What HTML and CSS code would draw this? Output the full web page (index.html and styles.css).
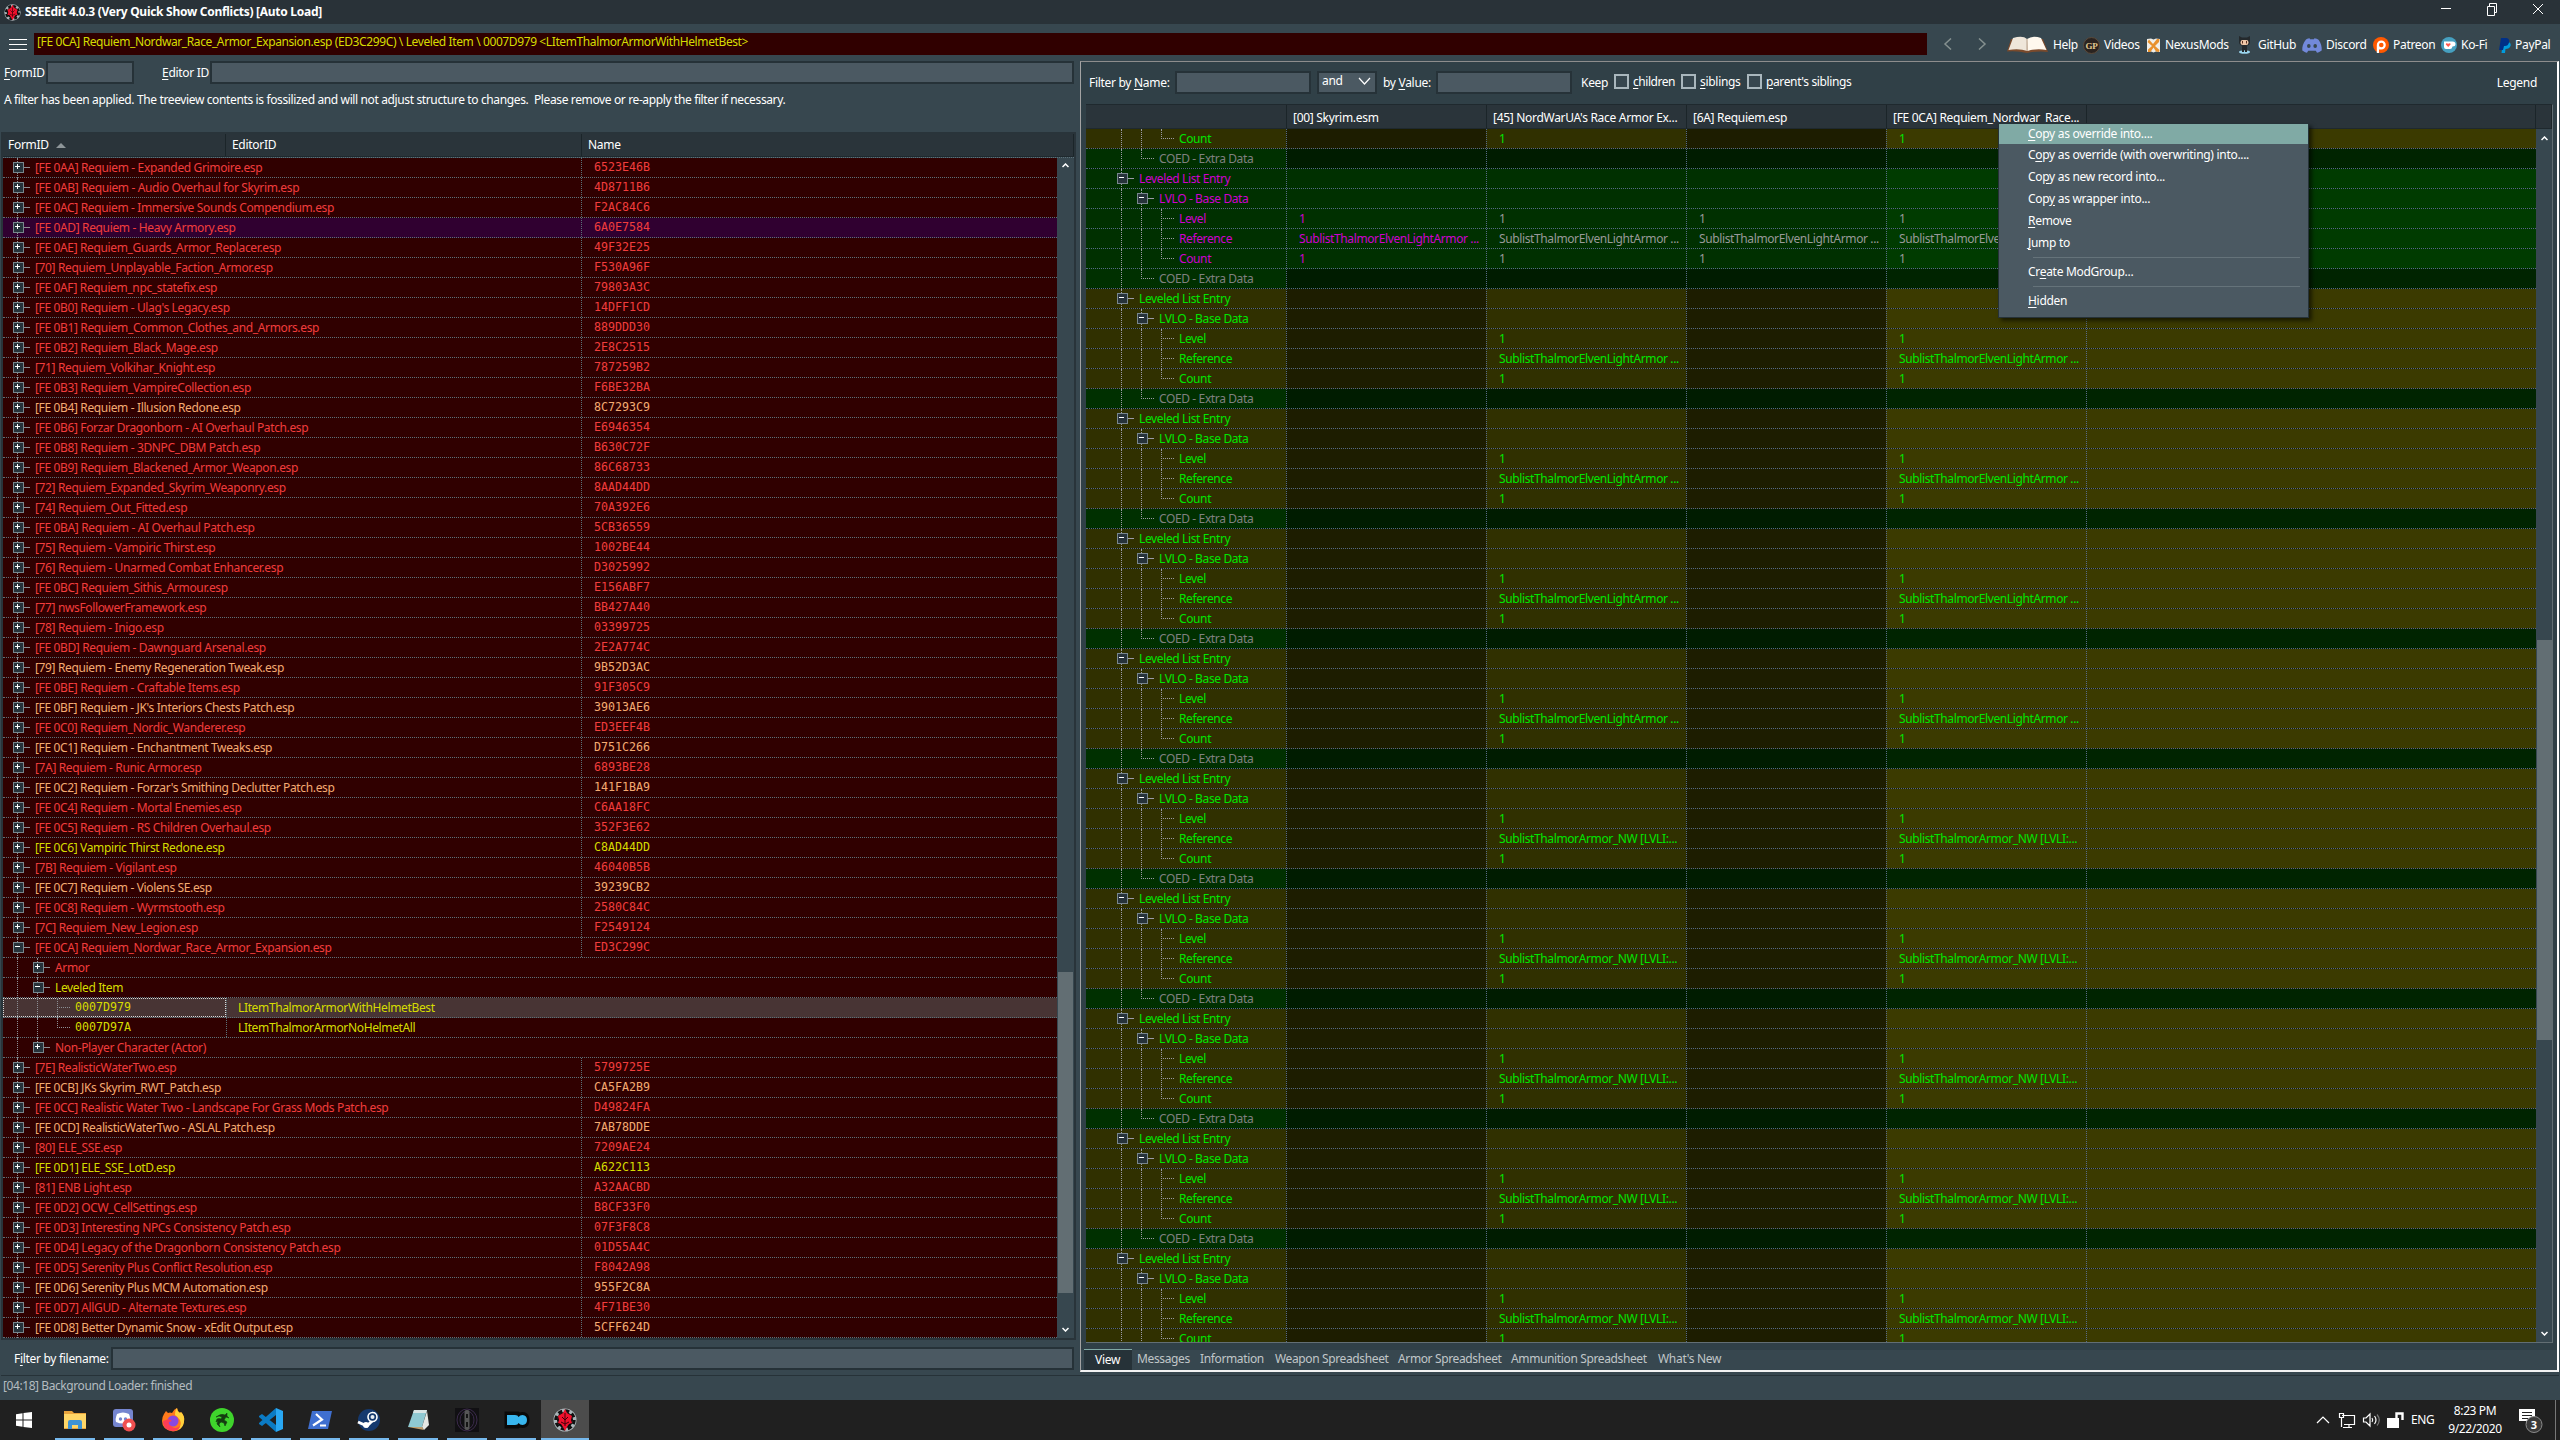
FILE: index.html
```html
<!DOCTYPE html>
<html lang="en">
<head>
<meta charset="utf-8">
<title>SSEEdit 4.0.3</title>
<link rel="stylesheet" href="styles.css">
</head>
<body>
<svg class="defs" width="0" height="0">
  <symbol id="sse" viewBox="0 0 24 24"><circle cx="12" cy="12" r="11.5" fill="#aab4b8"/><circle cx="12" cy="12" r="9.2" fill="none" stroke="#111" stroke-width="3" stroke-dasharray="4.2 3"/><circle cx="12" cy="12" r="8" fill="#0c0c0c"/><path d="M12 1l2 4 5 3-1 4 1 3-3 1-2 3-2 4-2-4-2-3-3-1 1-3-1-4 5-3z" fill="#f0102c"/><path d="M12 5v13M9 9l3 3 3-3M8 14l4 2 4-2" stroke="#400008" fill="none"/></symbol>
  <symbol id="discord" viewBox="0 0 20 15"><path d="M4 1.5C6 .5 7 .3 7.600.3L8 1.300h4l.4-1C14 .4 15.500 1 16.500 1.700 19 5 20 9 19.700 12.500 18 13.800 16.500 14.500 15 14.800l-1.200-2H6.200L5 14.800C3.500 14.500 2 13.800.3 12.500 0 9 1 5 4 1.500z" fill="#7289da"/><ellipse cx="6.800" cy="8" rx="1.800" ry="2" fill="#37474f"/><ellipse cx="13.200" cy="8" rx="1.800" ry="2" fill="#37474f"/></symbol>
</svg>

<header class="titlebar">
  <svg width="17" height="17"><use href="#sse"/></svg>
  <b class="apptitle">SSEEdit 4.0.3 (Very Quick Show Conflicts) [Auto Load]</b>
  <svg class="winbtns" width="104" height="14" fill="none" stroke="#fff"><path d="M1 6.500h10M47.500 4.500h7v9h-7zM49.500 4v-2.500h7v9H55M93 2l10 10M103 2L93 12"/></svg>
</header>

<div class="toolbar">
  <svg class="burger" width="18" height="11" stroke="#fff"><path d="M0 .5h18M0 5.500h18M0 10.500h18"/></svg>
  <div class="path">[FE 0CA] Requiem_Nordwar_Race_Armor_Expansion.esp (ED3C299C) \ Leveled Item \ 0007D979 &lt;LItemThalmorArmorWithHelmetBest&gt;</div>
  <svg class="nav" width="44" height="12" fill="none" stroke="#84908f" stroke-width="1.500"><path d="M8 .5L2 6l6 5.500M36 .5L42 6l-6 5.500"/></svg>
  <div class="links">
    <span class="link help"><svg width="43" height="18" viewBox="0 0 43 18"><path d="M5 3L1 15.500q10-1 20 1.500 12-2.500 21-1L37 3z" fill="#7a4a2c"/><path d="M7 2q10-3 14 1l.5 12Q13 12 2.500 14z" fill="#efe6da"/><path d="M35 2q-8-3-14 1l.5 12Q31 12 40.500 14z" fill="#fff8ee"/><path d="M21 3v12" stroke="#b59f8a"/></svg>Help</span>
    <span class="link videos"><svg width="17" height="17" viewBox="0 0 17 17"><circle cx="8.500" cy="8.500" r="8" fill="#2a2320" stroke="#5b4a3a"/><text x="8.500" y="12" text-anchor="middle" class="gp">GP</text></svg>Videos</span>
    <span class="link nexus"><svg width="15" height="15" viewBox="0 0 15 15"><path d="M1 1l4-.5 2.500 1L10 .5 14 1v13l-4-.5-2.500 1-2.500-1L1 14z" fill="#f0eee8"/><path d="M3 1.500L7 6l4-5h2.500L13 4 9 8l4.500 4-.5 2-3-.5-2.500-4-3 4.500H2v-2.500L6 8 1.500 4z" fill="#e8912c"/></svg>NexusMods</span>
    <span class="link github"><svg width="19" height="18" viewBox="0 0 19 18"><path d="M4 0l3 1.500h5L15 0v7q-1 3-5.500 3T4 7z" fill="#24292c"/><rect x="5.500" y="4" width="8" height="5" rx="2.300" fill="#f0c8a8"/><path d="M7.500 5v2.500M11.500 5v2.500" stroke="#5a3020"/><path d="M7 10h5v6H7z" fill="#24292c"/><ellipse cx="9.500" cy="16" rx="5.500" ry="1.800" fill="#9ad5ee"/><path d="M8 10v6M11 10v6" stroke="#24292c" stroke-width="2"/></svg>GitHub</span>
    <span class="link disc"><svg width="20" height="15"><use href="#discord"/></svg>Discord</span>
    <span class="link patreon"><svg width="16" height="16" viewBox="0 0 16 16"><circle cx="8" cy="8" r="8" fill="#ff5900"/><path d="M3.800 16V8a4.500 4.500 0 1 1 4.500 4.500H6V16z" fill="#fff"/><circle cx="8.300" cy="8" r="2.300" fill="#ff5900"/></svg>Patreon</span>
    <span class="link kofi"><svg width="16" height="16" viewBox="0 0 16 16"><circle cx="8" cy="8" r="8" fill="#46a0c0"/><path d="M3 4.500h8.500q3 0 3 2.500t-3 2.500Q11 12 9 12H5Q3 12 3 10z" fill="#fff"/><path d="M7.200 10L4.800 7.500q0-2 2.400-.8 2.400-1.200 2.400.8z" fill="#ff5a50"/></svg>Ko-Fi</span>
    <span class="link paypal"><svg width="12" height="15" viewBox="0 0 12 15"><path d="M4 4h5.500q3 1 2 4t-5 3L6 15H2.500z" fill="#009cde"/><path d="M2 0h5.500Q11 .5 10 4.500T5 8L4 12H0z" fill="#003087"/></svg>PayPal</span>
  </div>
</div>

<main class="main">
  <section class="left">
    <div class="idrow"><label class="lf"><u>F</u>ormID</label><div class="input i1"></div><label class="le"><u>E</u>ditor ID</label><div class="input i2"></div></div>
    <p class="note">A filter has been applied. The treeview contents is fossilized and will not adjust structure to changes.&nbsp; Please remove or re-apply the filter if necessary.</p>
    <div class="tree">
      <div class="thead"><span class="h1">FormID <i class="sort"></i></span><span class="h2">EditorID</span><span class="h3">Name</span></div>
      <div class="tbody">
        <div class="rows" id="plugins"></div>
        <div class="scroll"><svg width="7" height="5"><path d="M.5 4L3.500 1l3 3" fill="none" stroke="#fff" stroke-width="1.500"/></svg><div class="thumb t1"></div><svg width="7" height="5"><path d="M.5 1l3 3 3-3" fill="none" stroke="#fff" stroke-width="1.500"/></svg></div>
      </div>
    </div>
    <div class="filerow"><label>F<u>i</u>lter by filename:</label><div class="input i3"></div></div>
  </section>

  <section class="right">
    <div class="filters">
      <label class="fl">Filter by <u>N</u>ame:</label><div class="input"></div>
      <div class="select">and<svg width="13" height="8"><path d="M1 1l5.500 6L12 1" fill="none" stroke="#fff" stroke-width="1.200"/></svg></div>
      <label class="fv">by <u>V</u>alue:</label><div class="input"></div>
      <label class="fk">Keep</label>
      <i class="check"></i><label class="c1"><u>c</u>hildren</label><i class="check"></i><label class="c2"><u>s</u>iblings</label><i class="check"></i><label class="c3"><u>p</u>arent's siblings</label>
      <span class="legend">Legend</span>
    </div>
    <div class="grid">
      <div class="ghead"><span></span><span>[00] Skyrim.esm</span><span>[45] NordWarUA's Race Armor Ex...</span><span>[6A] Requiem.esp</span><span>[FE 0CA] Requiem_Nordwar_Race...</span><span></span><span></span></div>
      <div class="gbody">
        <div class="grows" id="records"></div>
        <div class="scroll s2"><svg width="7" height="5"><path d="M.5 4L3.500 1l3 3" fill="none" stroke="#fff" stroke-width="1.500"/></svg><div class="thumb t2"></div><svg width="7" height="5"><path d="M.5 1l3 3 3-3" fill="none" stroke="#fff" stroke-width="1.500"/></svg></div>
      </div>
    </div>
    <nav class="tabs"><span class="tab on">View</span><span class="tab w1">Messages</span><span class="tab w2">Information</span><span class="tab w3">Weapon Spreadsheet</span><span class="tab w4">Armor Spreadsheet</span><span class="tab w5">Ammunition Spreadsheet</span><span class="tab">What's New</span></nav>
  </section>
</main>

<div class="status">[04:18] Background Loader: finished</div>

<footer class="taskbar">
  <span class="task start"><svg width="16" height="16" fill="#fff"><path d="M0 2.200l6.500-.9v6.200H0zM7.500 1.100L16 0v7.500H7.500zM0 8.500h6.500v6.200L0 13.800zM7.500 8.500H16V16l-8.500-1.100z"/></svg></span>
  <span class="task run"><svg width="22" height="20" viewBox="0 0 22 20"><path d="M0 1h8l2 2h12v16H0z" fill="#e8a33c"/><path d="M0 4h22v14H0z" fill="#ffd667"/><path d="M4 19v-7q0-2 2-2h10q2 0 2 2v7h-4v-4H8v4z" fill="#3f93d4"/></svg></span>
  <span class="task run"><svg width="24" height="24" viewBox="0 0 24 24"><rect x="1" y="1" width="20" height="18" rx="3" fill="#7585cf"/><path d="M5 6q6-3 12 0 2 5 1 8-7 3-14 0-1-3 1-8z" fill="#fff"/><circle cx="8.500" cy="11" r="1.700" fill="#7585cf"/><circle cx="13.500" cy="11" r="1.700" fill="#7585cf"/><circle cx="17" cy="17" r="6.500" fill="#f05050"/><circle cx="17" cy="17" r="2.500" fill="#fff"/></svg></span>
  <span class="task run"><svg width="24" height="24" viewBox="0 0 24 24"><path d="M3 6l2-3 2 2q2-1 4 0 2-4 5-5 0 3 3 5l1-1q4 4 3 10-2 9-11 9.500Q1 22 1 13q0-4 2-7z" fill="#ff7a1c"/><path d="M16 0q0 3 3 5l1-1q4 4 3 10-1 6-6 8 4-5 2-10-2-3-5-5 0-5 2-7z" fill="#ffd23c"/><circle cx="12" cy="13" r="5.500" fill="#8a48e0"/><path d="M2 13q0 10 11 10 5-1 6-5-5 4-9 0-3-2-2-4l3-1q-3-3-6-1z" fill="#ff3d56"/></svg></span>
  <span class="task run"><svg width="24" height="24" viewBox="0 0 24 24"><circle cx="12" cy="12" r="12" fill="#3fd42c"/><path d="M6 9q5-4 9-2l2-2v3l2 2-3-1-2 3 3 2-2 4-1-3-3-1-2 2 1 3-3-3 1-3-2 1 1-3q2-1 4 0l1-2-3-1z" fill="#143c10" stroke="#143c10" stroke-width=".6"/></svg></span>
  <span class="task run"><svg width="24" height="24" viewBox="0 0 24 24"><path d="M17 0l7 3v18l-7 3z" fill="#29a7f2"/><path d="M17 0v7L3 18 0 16V15zM0 8l3-2 14 11v7L0 9z" fill="#0b7bc4"/></svg></span>
  <span class="task run"><svg width="24" height="20" viewBox="0 0 24 20"><path d="M4 1h20l-4 18H0z" fill="#3f6fd0"/><path d="M8 4l6 5.500L5 15.500M12 15.500h6" fill="none" stroke="#fff" stroke-width="2.200"/></svg></span>
  <span class="task run"><svg width="24" height="24" viewBox="0 0 24 24"><circle cx="12" cy="12" r="11" fill="#15396e"/><path d="M1 14l9 4 5-5 2-9" fill="none" stroke="#fff" stroke-width="3"/><circle cx="15.500" cy="9" r="4.500" fill="#15396e" stroke="#fff" stroke-width="1.600"/><circle cx="15.500" cy="9" r="2" fill="#e8eef5"/><circle cx="9" cy="17" r="3" fill="#fff"/></svg></span>
  <span class="task run"><svg width="22" height="22" viewBox="0 0 22 22"><path d="M7 1h13l-5 17H1z" fill="#8fc9d2"/><path d="M7 1h13l-1 3H6z" fill="#d8e4e4"/><path d="M20 2l2 14-5 5-2-3z" fill="#e6e8e4"/><path d="M1 18h14l2 3z" fill="#c0a070"/></svg></span>
  <span class="task run"><svg width="24" height="24" viewBox="0 0 24 24"><rect width="24" height="24" fill="#111013"/><ellipse cx="12" cy="12" rx="10" ry="11" fill="none" stroke="#3b2a4b"/><ellipse cx="12" cy="12" rx="7" ry="9" fill="none" stroke="#3b2a4b"/><rect x="9.500" y="2" width="5" height="20" rx="2" fill="#565656"/><path d="M11 6h2v4h-2zM11 14h2v5h-2z" fill="#151515"/></svg></span>
  <span class="task run"><svg width="32" height="22" viewBox="0 0 32 22"><path d="M6 4h12l1.500 1q8.500-2 8.500 6t-8.500 6L18 18H6z" fill="#0a0a0a" stroke="#0a0a0a" stroke-width="3"/><path d="M7 6h8q3 0 3.500 2 1.500-2 4-2 4.500.5 4.500 5t-4.500 5q-2.500 0-4-2-.5 2-3.500 2H7z" fill="#38b6ee"/></svg></span>
  <span class="task run active"><svg width="24" height="24"><use href="#sse"/></svg></span>
  <div class="tray">
    <svg width="90" height="20" viewBox="0 0 90 20" fill="none" stroke="#fff" stroke-width="1.200"><path d="M1 13l6-6 6 6M26 5.500h12.500v9H28M23.500 3.500h4v4h-4zM25.500 8v9M27 17.500h9M33 15v2M47.500 8h2.500l4-4v12l-4-4h-2.500zM56 8q1.500 2 0 4M58.500 6q3 4 0 8"/><path d="M61 4.500q4.500 5.500 0 11" stroke="#777"/><path d="M71 8h12v10H71z" fill="#fff" stroke="none"/><path d="M80.500 8V3.500h6V10" stroke-width="2.400"/></svg>
    <span class="lang">ENG</span>
    <span class="clock">8:23 PM<br>9/22/2020</span>
    <svg class="notif" width="26" height="26" viewBox="0 0 26 26"><path d="M1 2h16v12h-6l-3 3v-3H1z" fill="#fff"/><path d="M4 5.500h10M4 8.500h10M4 11.500h6" stroke="#222"/><circle cx="16" cy="17.500" r="8" fill="#3a3a3a" stroke="#8a8a8a"/><text x="16" y="22" text-anchor="middle" class="badge">3</text></svg>
    <i class="peek"></i>
  </div>
</footer>

<div class="menu">
  <div class="mi hot"><u>C</u>opy as override into....</div>
  <div class="mi">C<u>o</u>py as override (with overwriting) into....</div>
  <div class="mi">Co<u>p</u>y as new record into...</div>
  <div class="mi">Cop<u>y</u> as wrapper into...</div>
  <div class="mi"><u>R</u>emove</div>
  <div class="mi"><u>J</u>ump to</div>
  <hr>
  <div class="mi">Cr<u>e</u>ate ModGroup...</div>
  <hr>
  <div class="mi"><u>H</u>idden</div>
</div>
<script src="rows.js"></script>
</body>
</html>
```
FILE: rows.js
```js
// Plugin rows: colour key | label | CRC
const plugins = `r|[FE 0AA] Requiem - Expanded Grimoire.esp|6523E46B
r|[FE 0AB] Requiem - Audio Overhaul for Skyrim.esp|4D8711B6
r|[FE 0AC] Requiem - Immersive Sounds Compendium.esp|F2AC84C6
r purple|[FE 0AD] Requiem - Heavy Armory.esp|6A0E7584
r|[FE 0AE] Requiem_Guards_Armor_Replacer.esp|49F32E25
r|[70] Requiem_Unplayable_Faction_Armor.esp|F530A96F
r|[FE 0AF] Requiem_npc_statefix.esp|79803A3C
r|[FE 0B0] Requiem - Ulag's Legacy.esp|14DFF1CD
r|[FE 0B1] Requiem_Common_Clothes_and_Armors.esp|889DDD30
r|[FE 0B2] Requiem_Black_Mage.esp|2E8C2515
r|[71] Requiem_Volkihar_Knight.esp|787259B2
r|[FE 0B3] Requiem_VampireCollection.esp|F6BE32BA
o|[FE 0B4] Requiem - Illusion Redone.esp|8C7293C9
r|[FE 0B6] Forzar Dragonborn - AI Overhaul Patch.esp|E6946354
r|[FE 0B8] Requiem - 3DNPC_DBM Patch.esp|B630C72F
r|[FE 0B9] Requiem_Blackened_Armor_Weapon.esp|86C68733
r|[72] Requiem_Expanded_Skyrim_Weaponry.esp|8AAD44DD
r|[74] Requiem_Out_Fitted.esp|70A392E6
r|[FE 0BA] Requiem - AI Overhaul Patch.esp|5CB36559
r|[75] Requiem - Vampiric Thirst.esp|1002BE44
r|[76] Requiem - Unarmed Combat Enhancer.esp|D3025992
r|[FE 0BC] Requiem_Sithis_Armour.esp|E156ABF7
r|[77] nwsFollowerFramework.esp|BB427A40
r|[78] Requiem - Inigo.esp|03399725
r|[FE 0BD] Requiem - Dawnguard Arsenal.esp|2E2A774C
o|[79] Requiem - Enemy Regeneration Tweak.esp|9B52D3AC
r|[FE 0BE] Requiem - Craftable Items.esp|91F305C9
o|[FE 0BF] Requiem - JK's Interiors Chests Patch.esp|39013AE6
r|[FE 0C0] Requiem_Nordic_Wanderer.esp|ED3EEF4B
o|[FE 0C1] Requiem - Enchantment Tweaks.esp|D751C266
r|[7A] Requiem - Runic Armor.esp|6893BE28
o|[FE 0C2] Requiem - Forzar's Smithing Declutter Patch.esp|141F1BA9
r|[FE 0C4] Requiem - Mortal Enemies.esp|C6AA18FC
r|[FE 0C5] Requiem - RS Children Overhaul.esp|352F3E62
y|[FE 0C6] Vampiric Thirst Redone.esp|C8AD44DD
r|[7B] Requiem - Vigilant.esp|46040B5B
o|[FE 0C7] Requiem - Violens SE.esp|39239CB2
r|[FE 0C8] Requiem - Wyrmstooth.esp|2580C84C
r|[7C] Requiem_New_Legion.esp|F2549124
r|[FE 0CA] Requiem_Nordwar_Race_Armor_Expansion.esp|ED3C299C|minus
r|Armor||vp
y|Leveled Item||vm
y sel|0007D979|LItemThalmorArmorWithHelmetBest|vvt
y|0007D97A|LItemThalmorArmorNoHelmetAll|vvl
r|Non-Player Character (Actor)||vq
r|[7E] RealisticWaterTwo.esp|5799725E
o|[FE 0CB] JKs Skyrim_RWT_Patch.esp|CA5FA2B9
r|[FE 0CC] Realistic Water Two - Landscape For Grass Mods Patch.esp|D49824FA
o|[FE 0CD] RealisticWaterTwo - ASLAL Patch.esp|7AB78DDE
r|[80] ELE_SSE.esp|7209AE24
y|[FE 0D1] ELE_SSE_LotD.esp|A622C113
r|[81] ENB Light.esp|A32AACBD
r|[FE 0D2] OCW_CellSettings.esp|B8CF33F0
r|[FE 0D3] Interesting NPCs Consistency Patch.esp|07F3F8C8
r|[FE 0D4] Legacy of the Dragonborn Consistency Patch.esp|01D55A4C
r|[FE 0D5] Serenity Plus Conflict Resolution.esp|F8042A98
o|[FE 0D6] Serenity Plus MCM Automation.esp|955F2C8A
r|[FE 0D7] AllGUD - Alternate Textures.esp|4F71BE30
o|[FE 0D8] Better Dynamic Snow - xEdit Output.esp|5CFF624D`;

// Guide cells: v line, t tee, l elbow, p plus, m minus, q plus on an elbow
const guides = s => [...s].map(c => `<i class="g g-${c}"></i>`).join('');

document.getElementById('plugins').innerHTML = plugins.split('\n').map(line => {
  const [cls, label, val, kind] = line.split('|');
  const g = !kind ? 'p' : kind === 'minus' ? 'm' : kind;
  if (g.length === 3)
    return `<div class="row ${cls} item"><span class="c-id">${guides(g)}<span class="hex">${label}</span></span><span class="c-ed">${val}</span></div>`;
  return `<div class="row ${cls}"><span class="c-name">${guides(g)}<span class="lbl">${label}</span></span>${val ? `<span class="c-crc">${val}</span>` : ''}</div>`;
}).join('');

const rec = (cls, g, label, vals = ['', '', '', '']) =>
  `<div class="grow ${cls}"><span class="tc">${guides(g)}<span class="lbl">${label}</span></span>${vals.map(v => `<span>${v}</span>`).join('')}<span></span></div>`;
const group = (cls, one, ref) =>
  rec(cls, 'm', 'Leveled List Entry') + rec(cls, 'vm', 'LVLO - Base Data') +
  rec(cls, 'vvt', 'Level', one) + rec(cls, 'vvt', 'Reference', ref) + rec(cls, 'vvl', 'Count', one) +
  rec('coed', 'vl', 'COED - Extra Data');
const elven = 'SublistThalmorElvenLightArmor ...', nw = 'SublistThalmorArmor_NW [LVLI:...';
const some = v => ['', v, '', v];
let html = rec('add', 'vvl', 'Count', some('1')) + rec('coed', 'vl', 'COED - Extra Data');
html += group('same', Array(4).fill('1'), Array(4).fill(elven));
for (let i = 0; i < 8; i++) html += group('add', some('1'), some(i < 4 ? elven : nw));
// the ninth group runs off the bottom of the view
html += rec('add', 'm', 'Leveled List Entry') + rec('add', 'vm', 'LVLO - Base Data') +
  rec('add', 'vvt', 'Level', some('1')) + rec('add', 'vvt', 'Reference', some(nw)) + rec('add', 'vvl', 'Count', some('1'));
document.getElementById('records').innerHTML = html;
```
FILE: styles.css
```css
* { box-sizing: border-box; }
body { margin: 0; width: 2560px; height: 1440px; overflow: hidden; display: flex; flex-direction: column; background: #37474f; color: #fff; font: 12px/16px "Noto Sans", "Open Sans", sans-serif; letter-spacing: -.3px; white-space: nowrap; position: relative; }
svg { flex: none; display: block; }
u { text-underline-offset: 2px; }
.defs { position: absolute; }
.titlebar { height: 24px; background: #293238; display: flex; align-items: center; padding-left: 4px; flex: none; }
.apptitle { margin-left: 4px; letter-spacing: -.28px; }
.winbtns { margin: -7px 16px 0 auto; }
.toolbar { height: 37px; flex: none; display: flex; align-items: center; padding-left: 9px; }
.burger { margin-top: 4px; }
.path { margin-left: 7px; width: 1893px; height: 22px; background: #300000; color: #d6dc00; padding-left: 3px; line-height: 17px; margin-top: 3px; letter-spacing: -.39px; }
.nav { margin-left: 16px; margin-top: 3px; }
.links { display: flex; margin-left: 19px; margin-top: 5px; height: 22px; }
.link { display: flex; align-items: center; gap: 4px; }
.help { width: 77px; }
.videos { width: 63px; }
.nexus { width: 89px; }
.github { width: 67px; }
.disc { width: 71px; }
.patreon { width: 68px; }
.kofi { width: 58px; }
.gp { font: bold 9px "Liberation Serif", serif; fill: #e0c890; }
.main { display: flex; height: 1312px; flex: none; }
.left { width: 1080px; display: flex; flex-direction: column; }
.idrow { display: flex; height: 23px; align-items: center; }
.lf { width: 42px; margin-left: 4px; }
.le { width: 48px; margin-left: 28px; }
.input, .select { height: 23px; background: #4b5962; border: 2px solid #263238; }
.i1 { width: 88px; }
.i2 { width: 864px; }
.note { margin: 8px 0 0 4px; height: 40px; letter-spacing: -.37px; }
.tree { margin-left: 1px; width: 1075px; height: 1208px; border: 2px solid #29343a; background: #37474f; }
.thead { height: 23px; background: #2a343a; border-bottom: 1px solid #1f292e; display: flex; line-height: 22px; margin-bottom: 1px; }
.thead span { border-right: 1px solid #1b2529; height: 22px; padding-left: 6px; }
.thead .h1 { width: 223px; display: flex; align-items: center; gap: 7px; padding-left: 5px; }
.h2 { width: 356px; }
.h3 { flex: 1; border: 0; }
.sort { border: 5px solid transparent; border-bottom-color: #8e9699; border-top: 0; }
.tbody { display: flex; height: 1181px; margin-top: -1px; border-top: 1px dotted #5b7078; }
.rows { width: 1054px; background: #300000; letter-spacing: -.36px; }
.row { height: 20px; border-bottom: 1px dotted #5b7078; display: flex; line-height: 19px; }
.r { color: #f23d3d; } .o { color: #f5ab72; } .y { color: #d6dc00; }
.purple { background: #300030; }
.sel { background: #483434; }
.c-name, .c-id { display: flex; padding-left: 4px; }
.c-name { width: 578px; }
.c-id { width: 223px; }
.sel .c-id { outline: 1px dotted #d8d8d8; outline-offset: -1px; }
.c-crc, .hex { font: 11.650px/19px "DejaVu Sans Mono", monospace; letter-spacing: 0; }
.c-crc { border-left: 1px dotted #5b7078; padding-left: 12px; }
.c-ed { border-left: 1px dotted #5b7078; padding-left: 11px; }
.lbl, .hex { margin-left: 8px; }

/* tree guide lines */
.g { width: 20px; height: 20px; flex: none; position: relative; margin-bottom: -1px; --c: #8c8f94; }
.g::before { content: ""; position: absolute; left: 10px; top: 0; height: 20px; border-left: 1px dotted var(--c); }
.g-l::before, .g-q::before { height: 10px; }
.g-t::after, .g-l::after { content: ""; position: absolute; left: 10px; top: 9px; width: 13px; border-top: 1px dotted var(--c); }
.g-p, .g-m, .g-q { background: linear-gradient(var(--c), var(--c)) 15px 9px / 8px 1px no-repeat; width: 23px; margin-right: -3px; }
.g-p::after, .g-m::after, .g-q::after { content: ""; position: absolute; left: 6px; top: 4px; width: 9px; height: 9px; border: 1px solid #78868d; background: linear-gradient(#fff, #fff) 1px 3px / 5px 1px no-repeat, linear-gradient(#fff, #fff) 3px 1px / 1px 5px no-repeat, #26323a; }
.g-m::after { background: linear-gradient(#fff, #fff) 1px 3px / 5px 1px no-repeat, #26323a; }

.scroll { width: 17px; display: flex; flex-direction: column; align-items: center; padding: 5px 0 6px; background: #37474f; }
.thumb { width: 15px; background: #626e73; }
.t1 { height: 321px; margin: 804px 0 auto; }
.filerow { display: flex; align-items: center; margin: 7px 0 0 14px; }
.filerow label { width: 97px; }
.i3 { width: 963px; }

.right { width: 1479px; height: 1311px; border: 2px solid #fff; border-top: 1px solid #8d8d8d; border-left: 1px solid #a3a3a3; border-bottom-color: #f2f2f2; background: #304047; display: flex; flex-direction: column; }
.filters { display: flex; align-items: center; height: 41px; padding-left: 8px; }
.filters .input { width: 136px; }
.fl { width: 86px; padding-top: 2px; }
.select { width: 60px; margin-left: 6px; padding: 0 4px 0 3px; display: flex; justify-content: space-between; align-items: center; line-height: 14px; padding-bottom: 2px; }
.fv { width: 53px; margin-left: 6px; padding-top: 2px; }
.fk { width: 33px; margin-left: 9px; padding-top: 2px; }
.check { width: 15px; height: 15px; border: 2px solid #a9b7bd; background: #37474f; margin-right: 4px; margin-top: -2px; }
.c1 { width: 48px; letter-spacing: -.45px; }
.c2 { width: 47px; }
.c3 { letter-spacing: -.38px; }
.legend { margin: 0 20px 0 auto; padding-top: 2px; }
.grid { margin: 2px 0 0 5px; width: 1467px; height: 1239px; border: 1px solid #626e73; border-top-color: #1f292e; border-left: 0; }
.ghead { display: grid; grid-template-columns: 201px 200px 200px 200px 200px 449px 1fr; height: 24px; background: #2a343a; border-bottom: 1px solid #1f292e; line-height: 25px; }
.ghead span { border-right: 1px solid #1b2529; padding-left: 6px; }
.gbody { display: flex; height: 1213px; overflow: hidden; }
.grows { width: 1450px; letter-spacing: -.38px; }
.grow { display: grid; grid-template-columns: 200px 200px 200px 200px 200px 1fr; height: 20px; line-height: 20px; border-bottom: 1px dotted #566a86; }
.grow > span { border-left: 1px dotted #566a86; padding-left: 12px; height: 19px; }
.grow > .tc { display: flex; padding-left: 25px; border: 0; }
.grow .g { --c: #9a9aa6; }
.add { color: #00e600; background: #1d1d00; }
.add > :nth-child(1), .add > :nth-child(3) { background: #303000; }
.add > :nth-child(n+5) { background: #3b3a00; }
.same { color: #999; background: #003000; }
.same > :nth-child(-n+2) { color: #d000d0; }
.same > :nth-child(n+5) { background: #003b00; }
.coed { color: #808080; background: #001c00; }
.coed > :nth-child(1) { background: #003000; }
.coed > :nth-child(n+5) { background: #002400; }
.s2 { width: 16px; padding: 7px 0 6px; }
.t2 { height: 400px; margin: 499px 0 auto; }
.tabs { display: flex; margin-top: 6px; padding-left: 3px; background: #37474f; color: #c0c6c8; box-shadow: inset 0 1px #304047; line-height: 20px; flex: 1; }
.tab.on { width: 48px; background: #263238; color: #fff; border-top: 1px solid #80aaa5; padding-left: 11px; margin-right: 5px; }
.w1 { width: 63px; } .w2 { width: 75px; } .w3 { width: 123px; } .w4 { width: 113px; } .w5 { width: 147px; }
.w1, .w2, .w3, .w4, .w5 { letter-spacing: -.37px; }
.status { margin: 2px 1px 0; height: 25px; flex: none; border-top: 1px solid #263238; padding: 2px; color: #b4bcc0; letter-spacing: -.42px; }

.taskbar { height: 40px; flex: none; background: #202020; display: flex; letter-spacing: 0; }
.task { width: 40px; margin-right: 9px; display: flex; align-items: center; justify-content: center; }
.start { margin: 0 9px 0 2px; width: 44px; }
.run { border-bottom: 2px solid #76b9ed; padding-top: 2px; }
.active { width: 48px; margin-left: -4px; background: #4c4c4c; }
.tray { margin-left: auto; display: flex; align-items: center; height: 40px; }
.lang { margin-left: 5px; width: 24px; letter-spacing: -.4px; }
.clock { width: 80px; text-align: center; line-height: 18px; letter-spacing: -.4px; }
.notif { margin-left: 3px; }
.badge { font: bold 11px "Noto Sans", sans-serif; fill: #fff; }
.peek { width: 1px; height: 40px; background: #777; margin: 0 4px 0 11px; }

.menu { position: absolute; left: 1998px; top: 123px; width: 311px; height: 195px; background: #4b5962; border: 1px solid #263238; box-shadow: 3px 3px 4px rgba(0,0,0,.55); }
.mi { height: 22px; padding-left: 29px; line-height: 22px; }
.hot { height: 20px; line-height: 20px; background: #80aaa5; }
.menu hr { margin: 3px 8px 3px 34px; border: 0; height: 1px; background: #65737a; }
```
